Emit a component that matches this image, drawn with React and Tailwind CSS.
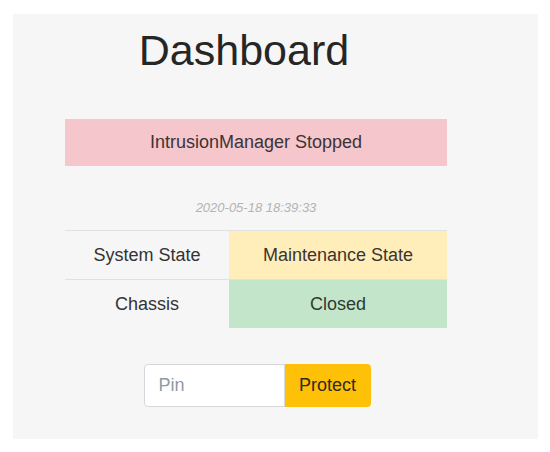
export default function App() {
  return (
    <div className="w-[550px] h-[452px] bg-white pt-[14px] pl-[13px]" style={{ fontFamily: '"Liberation Sans", Arial, sans-serif' }}>
      <div className="w-[525px] h-[425px] bg-[#f6f6f6] pt-[10px]">
        <div className="w-[382px] ml-[52px] flex flex-col">
          <h1 className="text-[43px] leading-[53px] text-[#262626] text-center pr-[24px] font-normal">Dashboard</h1>
          <div className="mt-[42px] h-[47px] bg-[#f5c6cb] flex items-center justify-center text-[18px] text-[#3b3435]">
            IntrusionManager Stopped
          </div>
          <div className="mt-[33px] h-[18px] leading-[18px] text-center text-[13px] italic text-[#b4b4b4]">
            2020-05-18 18:39:33
          </div>
          <div className="mt-[13px] flex flex-col text-[18px] text-[#333]">
            <div className="flex h-[49px] border-t border-[#e1e1e1]">
              <div className="w-[164px] flex items-center justify-center">System State</div>
              <div className="flex-1 flex items-center justify-center bg-[#ffeeba] text-[#3a3530]">Maintenance State</div>
            </div>
            <div className="flex h-[49px] border-t border-[#e1e1e1]">
              <div className="w-[164px] flex items-center justify-center">Chassis</div>
              <div className="flex-1 flex items-center justify-center bg-[#c3e6cb] text-[#2f3a33]">Closed</div>
            </div>
          </div>
          <div className="mt-[36px] flex justify-center pl-[2px]">
            <input
              placeholder="Pin"
              className="w-[141px] h-[43px] bg-white border border-[#d4d7db] rounded-l-[4px] px-[14px] text-[18px] placeholder:text-[#8e9aa6] outline-none"
            />
            <button className="w-[86px] h-[43px] bg-[#ffc107] rounded-r-[4px] text-[18px] text-[#2e2a22]">
              Protect
            </button>
          </div>
        </div>
      </div>
    </div>
  );
}
